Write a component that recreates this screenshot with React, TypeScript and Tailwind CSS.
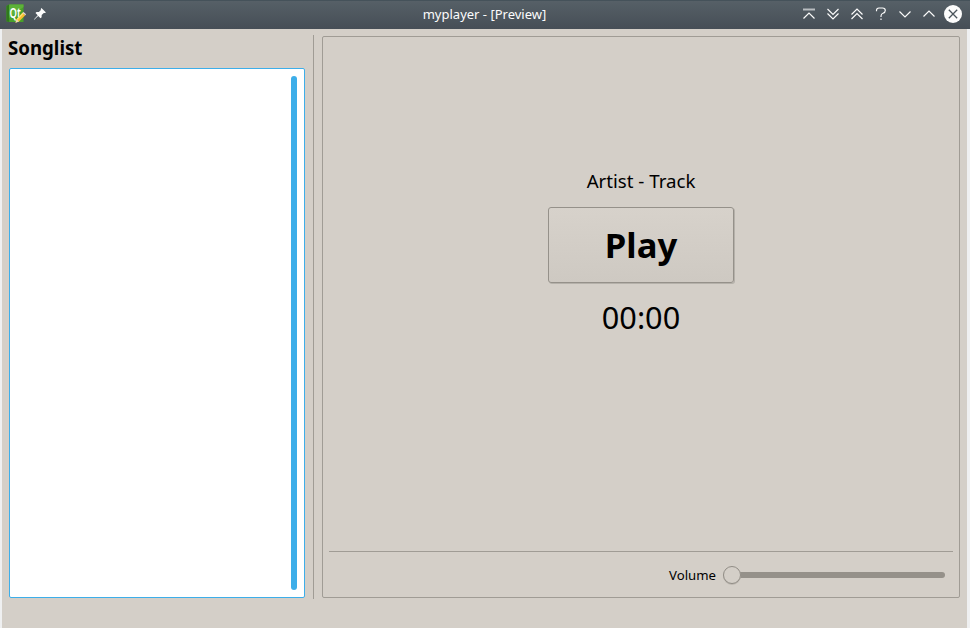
import React from "react";

function QtLogo() {
  return (
    <svg width="22" height="22" viewBox="0 0 22 22" className="block">
      <path d="M1.5 3 4.2 1.6H18.5V19H4.2L1.5 18.3Z" fill="#48a02a" />
      <path d="M1.5 3 4.2 1.6V19L1.5 18.3Z" fill="#2f7a1c" />
      <path d="M4.2 1.6H18.5V4L4.2 15Z" fill="#5db238" />
      <g transform="translate(4.4 14.6) scale(.68 1)">
        <text x="0" y="0" fontSize="14" fontWeight="600" fill="#fff" fontFamily="Noto Sans, sans-serif">Qt</text>
      </g>
      <path d="M10.5 19.7 11.5 16.3 17.5 9.8 20.3 12.2 14 18.5Z" fill="#f6bd2e" />
      <path d="m11.5 16.3 1.3.5 6-6.3-1.3-.7Z" fill="#ffe070" />
      <path d="m17.5 9.8 1-.8 2.6 2.3-.8.9Z" fill="#f0d8d8" />
      <path d="M10.5 19.7 11.5 16.3 14 18.5Z" fill="#ead9bd" />
    </svg>
  );
}

function Pin() {
  return (
    <svg width="14" height="14" viewBox="0 0 14 14" className="block">
      <path d="M8.4 1 13 5.4 11.8 6 10.8 5.9 8.7 8 8.6 10.3 7.6 11.2 5.2 8.9 1.5 12.5.9 12.9 1.3 12.1 4.7 8.3 2.5 6.1 3.5 5.1 5.9 5 7.9 3.1 7.8 2Z" fill="#fcfcfc" />
    </svg>
  );
}

function Glyph({ d, children }: { d: string; children?: React.ReactNode }) {
  return (
    <svg width="18" height="18" viewBox="0 0 18 18" fill="none" stroke="#fcfcfc" strokeWidth="1.15" className="block">
      {children}
      <path d={d} />
    </svg>
  );
}

function TitleBar() {
  return (
    <header className="grid h-[29px] grid-cols-[1fr_auto_1fr] items-center border-t border-[#45525a] bg-linear-to-b from-[#566067] to-[#464e56] pr-2 pb-[2px] pl-[5px] text-[#fcfcfc]">
      <div className="flex items-center gap-[6px]">
        <QtLogo />
        <Pin />
      </div>
      <h1 className="ml-[2px] text-[13px] leading-[18px] font-normal">myplayer - [Preview]</h1>
      <div className="flex items-center justify-end gap-1.5">
        <Glyph d="m3.5 13.5 5.5-5.5 5.5 5.5"><path d="M3 4.5h12" stroke="#b9bdc0" strokeWidth="2" /></Glyph>
        <Glyph d="m3.5 4 5.5 5.5L14.5 4M3.5 8.5 9 14l5.5-5.5" />
        <Glyph d="M3.5 9.5 9 4l5.5 5.5M3.5 14 9 8.5l5.5 5.5" />
        <Glyph d="M4.5 6.2V5.5Q4.5 3 7 3h3.5Q13.3 3 13.3 5.5 13.3 7.5 11 8.2 9 8.8 9 11v1M9 13.5v1.5" />
        <Glyph d="m3.5 6.5 5.5 5.5 5.5-5.5" />
        <Glyph d="m3.5 11.5 5.5-5.5 5.5 5.5" />
        <svg width="18" height="18" viewBox="0 0 18 18" className="block">
          <circle cx="9" cy="9" r="9" fill="#fcfcfc" />
          <path d="m4.8 4.8 8.4 8.4m0-8.4-8.4 8.4" stroke="#4b555c" strokeWidth="1.3" />
        </svg>
      </div>
    </header>
  );
}

export default function App() {
  return (
    <div className="flex h-[628px] w-[970px] flex-col overflow-hidden bg-[#eff0f1] font-['Noto_Sans',sans-serif] text-black">
      <TitleBar />
      <main className="mr-[3px] ml-[2px] flex min-h-0 flex-1 bg-[#d4cfc8] pb-[29px]">
        <section className="ml-[6px] flex w-[297px] flex-col pt-[6px] pb-px">
          <h2 className="h-[33px] text-[18.67px] leading-[26px] font-bold">Songlist</h2>
          <div className="ml-px flex min-h-0 flex-1 justify-end rounded-[2px] border border-[#3daee9] bg-white py-[7px] pr-[7px]">
            <div className="w-[6px] rounded-full bg-[#3daee9]" />
          </div>
        </section>
        <div className="mt-[6px] ml-[8px] w-px bg-[#a09c95]" />
        <section className="mt-[7px] mb-px ml-[8px] flex w-[638px] flex-col rounded-[2px] border border-[#a09c95] px-[6px]">
          <div className="flex h-[515px] flex-col items-center border-b border-[#a09c95] pt-[131px]">
            <p className="text-[18.67px] leading-[26px]">Artist - Track</p>
            <button className="mt-[13px] h-[76px] w-[186px] rounded-[3px] border border-[#95918a] bg-linear-to-b from-[#d7d2cb] to-[#cec9c2] pb-px text-[34.67px] leading-[48px] font-bold shadow-[1px_1px_0_#b5b1aa]">Play</button>
            <p className="mt-[13px] text-[30.67px] leading-[43px]">00:00</p>
          </div>
          <div className="flex flex-1 items-center justify-end pr-[8px]">
            <label className="mr-[7px] text-[13.2px] leading-[18px]">Volume</label>
            <div className="flex h-[20px] w-[222px] items-center">
              <div className="z-10 h-[18px] w-[18px] rounded-full border border-[#918d86] bg-[#d4cfc8] shadow-[0_1px_0_#bdb8b1]" />
              <div className="-ml-1 h-[6px] flex-1 rounded-r-full bg-[#95918a]" />
            </div>
          </div>
        </section>
      </main>
    </div>
  );
}
